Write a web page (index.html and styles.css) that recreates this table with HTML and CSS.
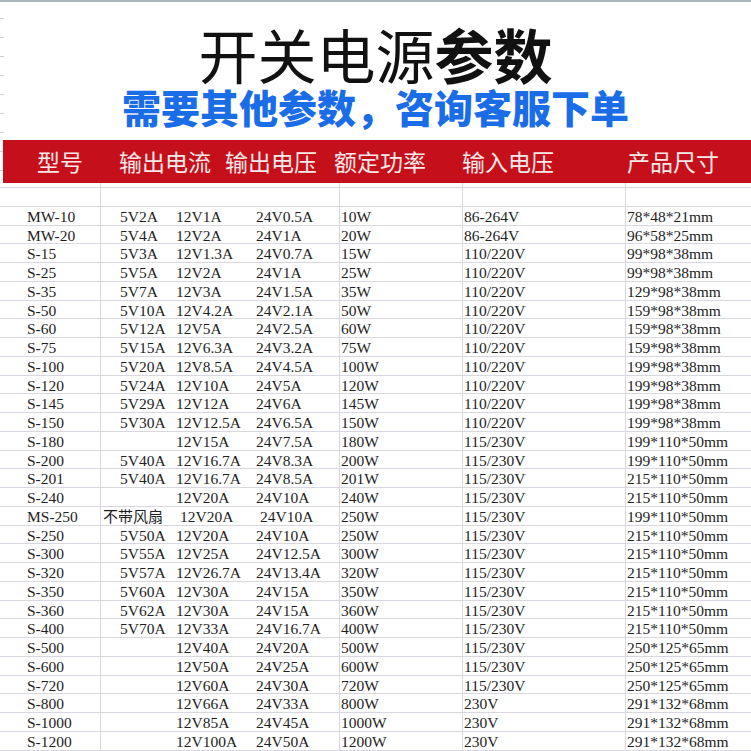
FILE: index.html
```html
<!DOCTYPE html>
<html lang="zh-CN">
<head>
<meta charset="utf-8">
<title>开关电源参数</title>
<link rel="stylesheet" href="styles.css">
</head>
<body>
<div class="page">
  <header class="header">
    <h1 class="title">开关电源<b>参数</b></h1>
    <p class="subtitle">需要其他参数，咨询客服下单</p>
    <div class="bar">
      <span>型号</span>
      <span>输出电流</span>
      <span>输出电压</span>
      <span>额定功率</span>
      <span>输入电压</span>
      <span>产品尺寸</span>
    </div>
  </header>
  <div class="sheet">
    <div class="row gap"><span class="c m"></span><span class="c a"></span><span class="c b"></span><span class="c v"></span><span class="c p"></span><span class="c i"></span><span class="c s"></span></div>
    <div class="row"><span class="c m"></span><span class="c a"></span><span class="c b"></span><span class="c v"></span><span class="c p"></span><span class="c i"></span><span class="c s"></span></div>
    <div class="row"><span class="c m">MW-10</span><span class="c a">5V2A</span><span class="c b">12V1A</span><span class="c v">24V0.5A</span><span class="c p">10W</span><span class="c i">86-264V</span><span class="c s">78*48*21mm</span></div>
    <div class="row"><span class="c m">MW-20</span><span class="c a">5V4A</span><span class="c b">12V2A</span><span class="c v">24V1A</span><span class="c p">20W</span><span class="c i">86-264V</span><span class="c s">96*58*25mm</span></div>
    <div class="row"><span class="c m">S-15</span><span class="c a">5V3A</span><span class="c b">12V1.3A</span><span class="c v">24V0.7A</span><span class="c p">15W</span><span class="c i">110/220V</span><span class="c s">99*98*38mm</span></div>
    <div class="row"><span class="c m">S-25</span><span class="c a">5V5A</span><span class="c b">12V2A</span><span class="c v">24V1A</span><span class="c p">25W</span><span class="c i">110/220V</span><span class="c s">99*98*38mm</span></div>
    <div class="row"><span class="c m">S-35</span><span class="c a">5V7A</span><span class="c b">12V3A</span><span class="c v">24V1.5A</span><span class="c p">35W</span><span class="c i">110/220V</span><span class="c s">129*98*38mm</span></div>
    <div class="row"><span class="c m">S-50</span><span class="c a">5V10A</span><span class="c b">12V4.2A</span><span class="c v">24V2.1A</span><span class="c p">50W</span><span class="c i">110/220V</span><span class="c s">159*98*38mm</span></div>
    <div class="row"><span class="c m">S-60</span><span class="c a">5V12A</span><span class="c b">12V5A</span><span class="c v">24V2.5A</span><span class="c p">60W</span><span class="c i">110/220V</span><span class="c s">159*98*38mm</span></div>
    <div class="row"><span class="c m">S-75</span><span class="c a">5V15A</span><span class="c b">12V6.3A</span><span class="c v">24V3.2A</span><span class="c p">75W</span><span class="c i">110/220V</span><span class="c s">159*98*38mm</span></div>
    <div class="row"><span class="c m">S-100</span><span class="c a">5V20A</span><span class="c b">12V8.5A</span><span class="c v">24V4.5A</span><span class="c p">100W</span><span class="c i">110/220V</span><span class="c s">199*98*38mm</span></div>
    <div class="row"><span class="c m">S-120</span><span class="c a">5V24A</span><span class="c b">12V10A</span><span class="c v">24V5A</span><span class="c p">120W</span><span class="c i">110/220V</span><span class="c s">199*98*38mm</span></div>
    <div class="row"><span class="c m">S-145</span><span class="c a">5V29A</span><span class="c b">12V12A</span><span class="c v">24V6A</span><span class="c p">145W</span><span class="c i">110/220V</span><span class="c s">199*98*38mm</span></div>
    <div class="row"><span class="c m">S-150</span><span class="c a">5V30A</span><span class="c b">12V12.5A</span><span class="c v">24V6.5A</span><span class="c p">150W</span><span class="c i">110/220V</span><span class="c s">199*98*38mm</span></div>
    <div class="row"><span class="c m">S-180</span><span class="c a"></span><span class="c b">12V15A</span><span class="c v">24V7.5A</span><span class="c p">180W</span><span class="c i">115/230V</span><span class="c s">199*110*50mm</span></div>
    <div class="row"><span class="c m">S-200</span><span class="c a">5V40A</span><span class="c b">12V16.7A</span><span class="c v">24V8.3A</span><span class="c p">200W</span><span class="c i">115/230V</span><span class="c s">199*110*50mm</span></div>
    <div class="row"><span class="c m">S-201</span><span class="c a">5V40A</span><span class="c b">12V16.7A</span><span class="c v">24V8.5A</span><span class="c p">201W</span><span class="c i">115/230V</span><span class="c s">215*110*50mm</span></div>
    <div class="row"><span class="c m">S-240</span><span class="c a"></span><span class="c b">12V20A</span><span class="c v">24V10A</span><span class="c p">240W</span><span class="c i">115/230V</span><span class="c s">215*110*50mm</span></div>
    <div class="row note"><span class="c m">MS-250</span><span class="c a">不带风扇</span><span class="c b">12V20A</span><span class="c v">24V10A</span><span class="c p">250W</span><span class="c i">115/230V</span><span class="c s">199*110*50mm</span></div>
    <div class="row"><span class="c m">S-250</span><span class="c a">5V50A</span><span class="c b">12V20A</span><span class="c v">24V10A</span><span class="c p">250W</span><span class="c i">115/230V</span><span class="c s">215*110*50mm</span></div>
    <div class="row"><span class="c m">S-300</span><span class="c a">5V55A</span><span class="c b">12V25A</span><span class="c v">24V12.5A</span><span class="c p">300W</span><span class="c i">115/230V</span><span class="c s">215*110*50mm</span></div>
    <div class="row"><span class="c m">S-320</span><span class="c a">5V57A</span><span class="c b">12V26.7A</span><span class="c v">24V13.4A</span><span class="c p">320W</span><span class="c i">115/230V</span><span class="c s">215*110*50mm</span></div>
    <div class="row"><span class="c m">S-350</span><span class="c a">5V60A</span><span class="c b">12V30A</span><span class="c v">24V15A</span><span class="c p">350W</span><span class="c i">115/230V</span><span class="c s">215*110*50mm</span></div>
    <div class="row"><span class="c m">S-360</span><span class="c a">5V62A</span><span class="c b">12V30A</span><span class="c v">24V15A</span><span class="c p">360W</span><span class="c i">115/230V</span><span class="c s">215*110*50mm</span></div>
    <div class="row"><span class="c m">S-400</span><span class="c a">5V70A</span><span class="c b">12V33A</span><span class="c v">24V16.7A</span><span class="c p">400W</span><span class="c i">115/230V</span><span class="c s">215*110*50mm</span></div>
    <div class="row"><span class="c m">S-500</span><span class="c a"></span><span class="c b">12V40A</span><span class="c v">24V20A</span><span class="c p">500W</span><span class="c i">115/230V</span><span class="c s">250*125*65mm</span></div>
    <div class="row"><span class="c m">S-600</span><span class="c a"></span><span class="c b">12V50A</span><span class="c v">24V25A</span><span class="c p">600W</span><span class="c i">115/230V</span><span class="c s">250*125*65mm</span></div>
    <div class="row"><span class="c m">S-720</span><span class="c a"></span><span class="c b">12V60A</span><span class="c v">24V30A</span><span class="c p">720W</span><span class="c i">115/230V</span><span class="c s">250*125*65mm</span></div>
    <div class="row"><span class="c m">S-800</span><span class="c a"></span><span class="c b">12V66A</span><span class="c v">24V33A</span><span class="c p">800W</span><span class="c i">230V</span><span class="c s">291*132*68mm</span></div>
    <div class="row"><span class="c m">S-1000</span><span class="c a"></span><span class="c b">12V85A</span><span class="c v">24V45A</span><span class="c p">1000W</span><span class="c i">230V</span><span class="c s">291*132*68mm</span></div>
    <div class="row"><span class="c m">S-1200</span><span class="c a"></span><span class="c b">12V100A</span><span class="c v">24V50A</span><span class="c p">1200W</span><span class="c i">230V</span><span class="c s">291*132*68mm</span></div>
  </div>
</div>
</body>
</html>
```

FILE: styles.css
```css
html, body {
  margin: 0;
  padding: 0;
  background: #ffffff;
}
.page {
  width: 751px;
  height: 751px;
  overflow: hidden;
  font-family: "Noto Sans CJK SC", "Noto Sans", sans-serif;
}
.header {
  border-top: 2px solid #aab7ba;
  background-image: repeating-linear-gradient(to bottom, transparent 0 16px, #cfcfcf 16px 17px, transparent 17px 19px);
  background-size: 4px 100%;
  background-repeat: no-repeat;
  padding-top: 22px;
}
.title {
  margin: 0;
  text-align: center;
  font-size: 59px;
  line-height: 59px;
  font-weight: 400;
  color: #111111;
}
.title b {
  font-weight: 700;
}
.subtitle {
  margin: 4px 0 0;
  text-align: center;
  font-size: 39px;
  line-height: 39px;
  font-weight: 900;
  color: #1a6de6;
}
.bar {
  margin: 14px 0 0 3px;
  height: 43px;
  background: #c5101b;
  display: grid;
  grid-template-columns: 82px 106px 109px 128px 165px 1fr;
  padding-left: 34px;
  color: #f7e9e9;
  font-size: 23px;
  line-height: 43px;
  white-space: nowrap;
}
.sheet {
  font-family: "Liberation Serif", "Noto Sans CJK SC", serif;
  font-size: 15.5px;
  color: #1e1e1e;
}
.row {
  display: grid;
  grid-template-columns: 101px 75px 80px 84px 123px 163px 1fr;
  height: 18.75px;
  box-sizing: border-box;
  border-bottom: 1px solid #d9d7e0;
  line-height: 19px;
  white-space: nowrap;
}
.row.gap {
  height: 5px;
}
.c {
  box-sizing: border-box;
}
.m {
  padding-left: 27px;
  border-right: 1px solid #d9d7e0;
}
.a {
  padding-left: 19px;
}
.b {
  padding-left: 0;
}
.v {
  padding-left: 0;
  border-right: 1px solid #d9d7e0;
}
.p {
  padding-left: 1px;
  border-right: 1px solid #d9d7e0;
}
.i {
  padding-left: 1px;
  border-right: 1px solid #d9d7e0;
}
.s {
  padding-left: 1px;
}
.note .a {
  padding-left: 2px;
  font-family: "Noto Sans CJK SC", sans-serif;
  font-size: 15px;
  line-height: 18px;
}
.note .b,
.note .v {
  padding-left: 4px;
}
```
